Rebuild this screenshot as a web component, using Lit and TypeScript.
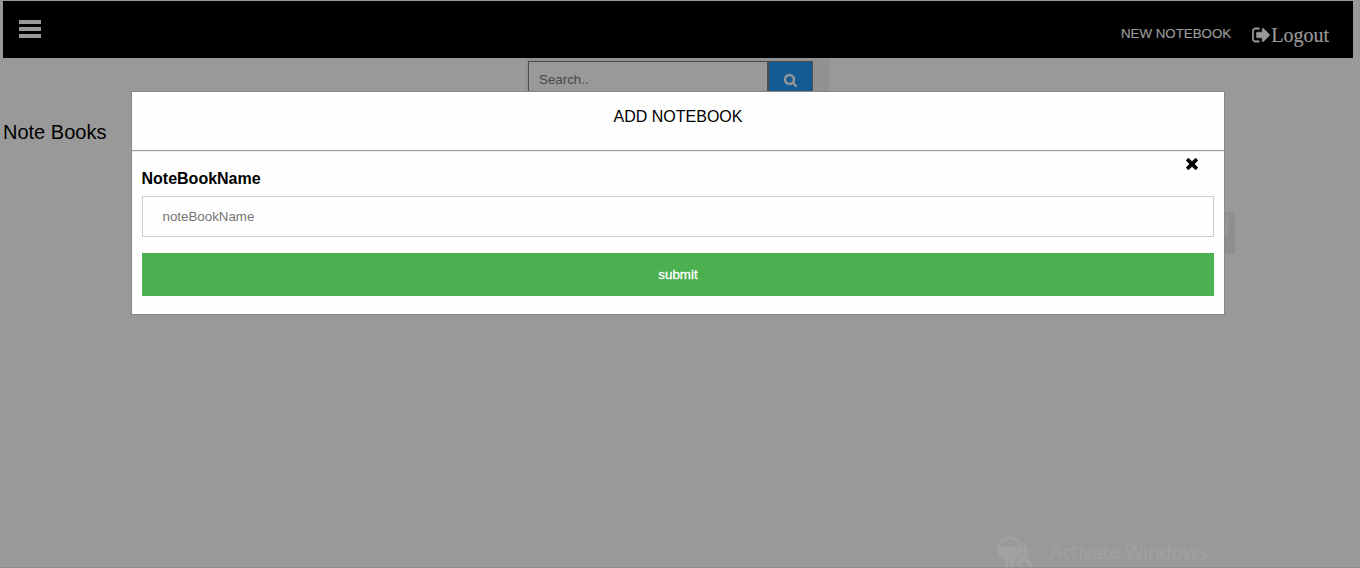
import { LitElement, html, css } from "lit";
import { customElement } from "lit/decorators.js";

@customElement("app-root")
class AppRoot extends LitElement {
  static styles = css`
    :host { display: block; position: relative; height: 568px; overflow: hidden; background: #999; color: #000; font-family: "Liberation Sans", Arial, sans-serif; }
    * { box-sizing: border-box; }
    svg { display: block; fill: currentColor; }
    .nav { display: flex; align-items: flex-start; justify-content: space-between; height: 58px; margin: 0 7px 0 3px; border-top: 1px solid #999; background: #000; color: #999; }
    .bars { margin: 19px 0 0 16px; }
    .links { display: flex; padding-right: 24px; }
    .new { font-size: 13.33px; line-height: 16px; margin: 25px 21px 0 0; white-space: nowrap; -webkit-text-stroke: 0.2px; }
    .logout { display: flex; font: 20px/24px "Liberation Serif", "Times New Roman", serif; margin-top: 22px; -webkit-text-stroke: 0.2px; }
    .logout svg { margin-top: 2px; }
    .bold { stroke: currentColor; stroke-width: 50; }
    .search { display: flex; width: 304px; height: 40px; margin-left: 526px; padding: 3px 17px 0 2px; background: #919191; }
    .query { width: 240px; height: 36px; border: 1px solid #4d4d4d; background: #999; color: #484848; font-size: 13.33px; line-height: 36px; padding-left: 10px; }
    .go { width: 45px; height: 36px; border: 1px solid #4d4d4d; background: #145b94; color: #999; padding: 11px 0 0 15px; }
    .title { margin: 22px 0 0 3px; font-size: 20px; line-height: 24px; }
    .behind { position: absolute; left: 1215px; top: 212px; width: 20px; height: 42px; background: #8e908f; }
    .chip { position: absolute; right: 7px; top: 5px; width: 8px; height: 18px; background: #979797; }
    .modal { position: absolute; left: 131px; top: 91px; width: 1094px; height: 224px; border: 1px solid #888; background: #fefefe; }
    .head { height: 59px; border-bottom: 1px solid #999; text-align: center; font-size: 16px; line-height: 18px; padding-top: 16px; }
    .body { display: flex; flex-direction: column; padding: 0 10px; border-top: 1px solid #eee; }
    .close { align-self: flex-end; margin: 6px 16px 0 0; }
    .label { font-weight: bold; font-size: 16px; line-height: 20px; margin: -1px 0 0 -0.5px; }
    .field { height: 41px; margin-top: 7px; border: 1px solid #ccc; color: #757575; font-size: 13.33px; line-height: 39px; padding-left: 19.5px; }
    .submit { height: 43px; margin-top: 16px; border: 0; background: #4caf50; color: #fff; font: 13.33px "Liberation Sans", Arial, sans-serif; -webkit-text-stroke: 0.3px; }
    .activate { position: absolute; left: 996px; top: 535px; display: flex; gap: 14px; color: #a1a1a1; font: 20px/34px "Open Sans", "Noto Sans", sans-serif; letter-spacing: -0.45px; white-space: nowrap; }
    .edge { position: absolute; left: 0; right: 0; bottom: 0; height: 1px; background: #8e8e8e; }
  `;

  render() {
    return html`
      <nav class="nav">
        <svg class="bars" width="22" height="18" viewBox="0 0 22 18"><path d="M0 0h22v4H0zM0 7h22v4H0zM0 14h22v4H0z"/></svg>
        <div class="links">
          <span class="new">NEW NOTEBOOK</span>
          <span class="logout"><svg class="bold" width="19" height="20" viewBox="0 0 1664 1792"><path d="M640 1440q0 4 1 20t.5 26.500-3 23.500-10 19.500-20.500 6.500H288q-119 0-203.500-84.500T0 1248V544q0-119 84.500-203.500T288 256h320q13 0 22.500 9.500T640 288q0 4 1 20t.5 26.500-3 23.500-10 19.500T608 384H288q-66 0-113 47t-47 113v704q0 66 47 113t113 47h312l11.500 1 11.500 3 8 5.500 7 9 2 13.500zm928-544q0 26-19 45l-544 544q-19 19-45 19t-45-19-19-45v-288H448q-26 0-45-19t-19-45V704q0-26 19-45t45-19h448V352q0-26 19-45t45-19 45 19l544 544q19 19 19 45z"/></svg>Logout</span>
        </div>
      </nav>
      <div class="search">
        <div class="query">Search..</div>
        <div class="go"><svg class="bold" width="13" height="14" viewBox="0 0 1664 1792"><path d="M1152 832q0-185-131.500-316.500T704 384 387.500 515.500 256 832t131.500 316.500T704 1280t316.500-131.500T1152 832zm512 832q0 52-38 90t-90 38q-54 0-90-38l-343-342q-179 124-399 124-143 0-273.500-55.500t-225-150-150-225T0 832t55.500-273.500 150-225 225-150T704 128t273.500 55.500 225 150 150 225T1408 832q0 220-124 399l343 343q37 37 37 90z"/></svg></div>
      </div>
      <div class="title">Note Books</div>
      <div class="behind"><div class="chip"></div></div>
      <div class="modal">
        <div class="head">ADD NOTEBOOK</div>
        <div class="body">
          <svg class="close" width="12" height="12" viewBox="100 300 1208 1208"><path d="M1298 1322q0 40-28 68l-136 136q-28 28-68 28t-68-28l-294-294-294 294q-28 28-68 28t-68-28L138 1390q-28-28-28-68t28-68l294-294-294-294q-28-28-28-68t28-68l136-136q28-28 68-28t68 28l294 294 294-294q28-28 68-28t68 28l136 136q28 28 28 68t-28 68l-294 294 294 294q28 28 28 68z" transform="translate(0 -56)"/></svg>
          <div class="label">NoteBookName</div>
          <div class="field">noteBookName</div>
          <button class="submit">submit</button>
        </div>
      </div>
      <div class="activate">
        <svg width="40" height="34" viewBox="0 0 40 34"><path fill-rule="evenodd" d="M13.500 1a12.500 12.500 0 0 1 4 24.400V34H9V25.200A12.500 12.500 0 0 1 13.500 1zM13.500 4A9.500 9.500 0 0 0 4.100 12h18.800A9.500 9.500 0 0 0 13.500 4zM12 27v7h2v-7z"/><path d="M27.500 7q6 9 4 15l8 12h-5l-6-8-3 1 4 7h-5l-6-6q9-5 9-21z"/></svg>
        <span>Activate Windows</span>
      </div>
      <div class="edge"></div>
    `;
  }
}
